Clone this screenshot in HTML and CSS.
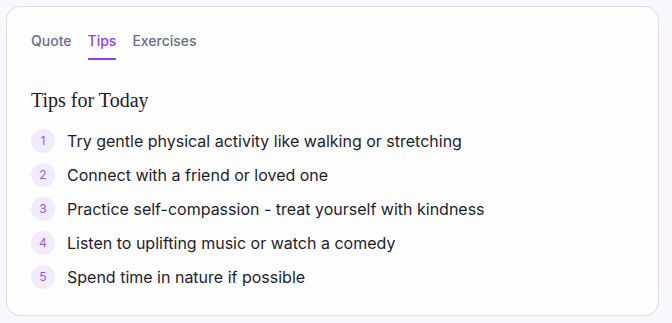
FILE: index.html
```html
<!DOCTYPE html>
<html lang="en">
<head>
<meta charset="utf-8">
<title>Tips for Today</title>
<link rel="stylesheet" href="styles.css">
</head>
<body>
<div class="card">
  <nav class="tabs">
    <span class="tab">Quote</span>
    <span class="tab active">Tips</span>
    <span class="tab">Exercises</span>
  </nav>
  <h2 class="title">Tips for Today</h2>
  <ol class="tips">
    <li class="tip"><span class="num">1</span><span class="text">Try gentle physical activity like walking or stretching</span></li>
    <li class="tip"><span class="num">2</span><span class="text">Connect with a friend or loved one</span></li>
    <li class="tip"><span class="num">3</span><span class="text">Practice self-compassion - treat yourself with kindness</span></li>
    <li class="tip"><span class="num">4</span><span class="text">Listen to uplifting music or watch a comedy</span></li>
    <li class="tip"><span class="num">5</span><span class="text">Spend time in nature if possible</span></li>
  </ol>
</div>
</body>
</html>
```
FILE: styles.css
```css
html, body {
  margin: 0;
  padding: 0;
  background: #f8f7fb;
  font-family: Inter, "Noto Sans", sans-serif;
}
.card {
  box-sizing: border-box;
  margin: 6px 0 0 6px;
  width: 653px;
  height: 310px;
  padding: 24px;
  background: #fefeff;
  border: 1px solid #e3d4fb;
  border-radius: 14px;
}
.tabs {
  display: flex;
  gap: 16px;
}
.tab {
  font-size: 14px;
  line-height: 20px;
  font-weight: 500;
  color: #64708a;
  padding-bottom: 7px;
  border-bottom: 2px solid transparent;
}
.tab.active {
  color: #9140ee;
  border-bottom-color: #9140ee;
}
.title {
  margin: 26px 0 15px;
  font-family: "Liberation Serif", "Times New Roman", serif;
  font-weight: 400;
  font-size: 20px;
  line-height: 28px;
  color: #1c1b2b;
}
.tips {
  list-style: none;
  margin: 0;
  padding: 0;
  display: flex;
  flex-direction: column;
  gap: 10px;
}
.tip {
  display: flex;
  align-items: center;
  gap: 12px;
  height: 24px;
}
.num {
  flex: none;
  width: 24px;
  height: 24px;
  border-radius: 50%;
  background: #f2eafd;
  color: #9a56f0;
  font-size: 12px;
  line-height: 24px;
  text-align: center;
}
.text {
  font-size: 16px;
  line-height: 24px;
  color: #1e1d2c;
}
```
